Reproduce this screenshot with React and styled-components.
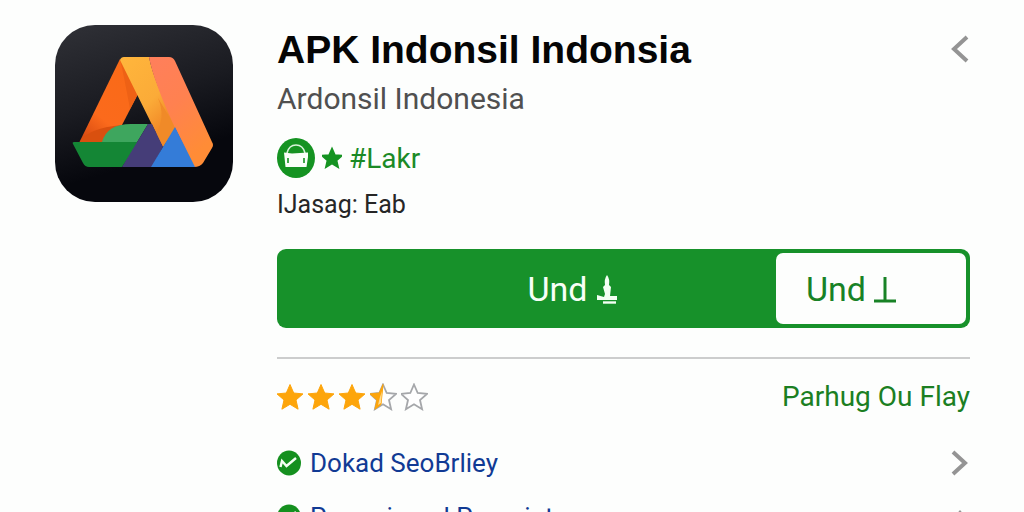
import React, { useState } from "react";
import styled, { createGlobalStyle } from "styled-components";

const links = [
    { name: "Dokad SeoBrliey", arrow: "right" },
    { name: "Panarrimeal Paparint", arrow: "up" },
];
const stars = [1, 1, 1, 0.5, 0];

const STAR_PATH =
    "M14 1.5 L17.7 10 L27 10.9 L20 17 L22.1 26.2 L14 21.3 L5.9 26.2 L8 17 L1 10.9 L10.3 10 Z";

const arrows = {
    left: "M17 3 L4 15 L17 27",
    right: "M3 4 L15 15 L3 26",
    up: "M3 19 L10 11 L17 19",
};

const AppLogo = () => (
    <Logo viewBox="0 0 178 178" role="img" aria-label="APK Indonsil">
        <defs>
            <linearGradient id="tile" x1="0" y1="0" x2="0.3" y2="1">
                <stop offset="0" stopColor="#303137" />
                <stop offset="0.5" stopColor="#1a1b21" />
                <stop offset="0.85" stopColor="#06070d" />
            </linearGradient>
            <linearGradient id="leftLeg" x1="0.8" y1="0" x2="0.2" y2="1">
                <stop offset="0" stopColor="#f96a17" />
                <stop offset="0.7" stopColor="#fb6a1c" />
                <stop offset="1" stopColor="#d94c12" />
            </linearGradient>
            <linearGradient id="fold" x1="0" y1="0" x2="0.6" y2="1">
                <stop offset="0" stopColor="#ffb63c" />
                <stop offset="0.6" stopColor="#fbab38" />
                <stop offset="1" stopColor="#ef7f22" />
            </linearGradient>
            <linearGradient id="rightLeg" x1="0" y1="0" x2="0.5" y2="1">
                <stop offset="0" stopColor="#ff7f5c" />
                <stop offset="0.5" stopColor="#ff8150" />
                <stop offset="1" stopColor="#ff8c36" />
            </linearGradient>
        </defs>
        <rect width="178" height="177" rx="40" fill="url(#tile)" />
        <path d="M65 34 L83 69 L67 100 L50 118 L24 118 Z" fill="url(#leftLeg)" />
        <path d="M65 34 L83 69 L75 84 Q70 56 65 34 Z" fill="#ee6115" />
        <path d="M24 118 Q32 103 67 100 L58 118 Z" fill="#d9500f" />
        <path
            d="M69 32 L94 32 Q98 54 121 101 L108 122 L65 35 Q66 32 69 32 Z"
            fill="url(#fold)"
        />
        <path d="M103 73 L121 103 L108 122 L101 109 Q111 92 103 73 Z" fill="#f08a28" />
        <path
            d="M94 32 L114 32 Q118 32 120 36 L157 117 Q159 120 157 123 L148 138 Q145 142 139 142 L120 103 Q98 55 94 32 Z"
            fill="url(#rightLeg)"
        />
        <path d="M47 117 Q52 99 76 99 L93 99 L81 119 Z" fill="#3ea65e" />
        <path
            d="M19 117 L84 117 L67 142 L34 142 Q30 142 28 138 L18 119 Q17 117 19 117 Z"
            fill="#148635"
        />
        <path d="M93 99 L97 99 L108 122 L97 142 L67 142 Z" fill="#453d78" />
        <path d="M120 102 L140 142 L96 142 Z" fill="#347cd8" />
    </Logo>
);

const ShopBadge = () => (
    <svg width="38" height="40" viewBox="0 0 38 40" aria-hidden="true">
        <ellipse cx="19" cy="20" rx="19" ry="20" fill="#159322" />
        <path
            d="M10 15 Q12 7 19 7 Q26 7 28 15"
            fill="none"
            stroke="#d9f3da"
            strokeWidth="1.6"
        />
        <path d="M7 14.5 L15 15.5 L31 14.5 L31 19 L29.5 29 L8.5 29 Z" fill="#fafffa" />
        <path
            d="M11 20 L11 25 M27 20 L27 25"
            stroke="#159322"
            strokeWidth="1.6"
        />
    </svg>
);

const Star = ({ fill }) => (
    <svg width="27" height="28" viewBox="1 0 27 28" aria-hidden="true">
        {fill < 1 && (
            <path d={STAR_PATH} fill="#fff" stroke="#a5a7aa" strokeWidth="1.8" />
        )}
        {fill === 1 && <path d={STAR_PATH} fill="#fda50b" stroke="#fda50b" />}
        {fill === 0.5 && (
            <>
                <path
                    d="M14 1.5 L10.3 10 L1 10.9 L8 17 L5.9 26.2 L12 21.5 Z"
                    fill="#fda50b"
                    stroke="#fda50b"
                />
                <path d="M13 8 L12 20 L9 22 L11 14 Z" fill="#ffdc92" />
            </>
        )}
    </svg>
);

const Check = () => (
    <svg width="24" height="26" viewBox="0 0 24 26" aria-hidden="true">
        <ellipse cx="12" cy="13" rx="12" ry="12.5" fill="#15901f" />
        <path
            d="M3.5 17 L5 11 L9.5 16 L19 8"
            fill="none"
            stroke="#f4fff4"
            strokeWidth="2.4"
        />
    </svg>
);

const Chevron = ({ to }) => (
    <svg width="20" height="30" viewBox="0 0 20 30" aria-hidden="true">
        <path d={arrows[to]} fill="none" stroke="#949494" strokeWidth="4" />
    </svg>
);

const App = () => {
    const [installed, setInstalled] = useState(false);

    return (
        <>
            <GlobalStyle />
            <Page>
                <AppLogo />
                <Detail>
                    <Header>
                        <div>
                            <Title>APK Indonsil Indonsia</Title>
                            <Developer>Ardonsil Indonesia</Developer>
                        </div>
                        <IconButton aria-label="Back">
                            <Chevron to="left" />
                        </IconButton>
                    </Header>
                    <BadgeRow>
                        <ShopBadge />
                        <svg width="20" height="24" viewBox="1 1 26 26" aria-hidden="true">
                            <path d={STAR_PATH} fill="#159322" stroke="#159322" strokeWidth="2" />
                        </svg>
                        <span>#Lakr</span>
                    </BadgeRow>
                    <Usage>IJasag: Eab</Usage>
                    <InstallBar>
                        <InstallButton onClick={() => setInstalled(!installed)}>
                            Und
                            <svg width="22" height="32" viewBox="0 0 22 32" aria-hidden="true">
                                <path
                                    d="M11 2 Q14 6 13 12 L15 14 L14 23 L21 23 L21 27 L1 27 L1 22 L8 24 L9 21 L7 14 L9 12 Q8 6 11 2 Z"
                                    fill="#f4fff4"
                                />
                                <path d="M7 29.5 L20 29.5" stroke="#f4fff4" strokeWidth="2.4" />
                            </svg>
                        </InstallButton>
                        <OpenButton>
                            Und
                            <svg width="22" height="28" viewBox="0 0 22 28" aria-hidden="true">
                                <path
                                    d="M11 2 L11 26 M0 26 L22 26"
                                    stroke="#188226"
                                    strokeWidth="3"
                                />
                            </svg>
                        </OpenButton>
                    </InstallBar>
                    <RatingRow>
                        <Stars role="img" aria-label="3.5 / 5">
                            {stars.map((v, i) => (
                                <Star key={i} fill={v} />
                            ))}
                        </Stars>
                        <PlayLink href="#play">Parhug Ou Flay</PlayLink>
                    </RatingRow>
                    <LinkList>
                        {links.map((v) => (
                            <li key={v.name}>
                                <LinkItem href="#detail">
                                    <Check />
                                    <LinkText>{v.name}</LinkText>
                                    <Chevron to={v.arrow} />
                                </LinkItem>
                            </li>
                        ))}
                    </LinkList>
                </Detail>
            </Page>
        </>
    );
};

export default App;

const GlobalStyle = createGlobalStyle`
    * {
        box-sizing: border-box;
    }
    html {
        scrollbar-width: none;
    }
    body {
        margin: 0;
        background-color: #fdfefd;
        font-family: Roboto, "Liberation Sans", sans-serif;
    }
    svg {
        display: block;
        flex-shrink: 0;
    }
`;
const Page = styled.main`
    display: flex;
    align-items: flex-start;
    gap: 44px;
    padding: 25px 54px 0 55px;
    @media (max-width: 600px) {
        flex-direction: column;
        padding: 24px;
    }
`;
const Logo = styled.svg`
    width: 178px;
`;
const Detail = styled.section`
    flex: 1;
    min-width: 0;
`;
const Header = styled.header`
    display: flex;
    justify-content: space-between;
    align-items: flex-start;
`;
const Title = styled.h1`
    margin: 0;
    font-family: "Liberation Sans", sans-serif;
    font-size: 39px;
    font-weight: 700;
    line-height: 50px;
    color: #050505;
`;
const Developer = styled.p`
    margin: 0;
    font-size: 30px;
    line-height: 48px;
    color: #505050;
`;
const IconButton = styled.button`
    margin-top: 9px;
    padding: 0;
    border: none;
    background: none;
    cursor: pointer;
`;
const BadgeRow = styled.div`
    display: flex;
    align-items: center;
    gap: 7px;
    height: 40px;
    margin-top: 15px;
    font-size: 28px;
    color: #1b8a26;
`;
const Usage = styled.p`
    margin: 8px 0 0;
    font-size: 25px;
    line-height: 38px;
    color: #262626;
`;
const InstallBar = styled.div`
    display: flex;
    height: 79px;
    margin-top: 25px;
    padding: 4px;
    border-radius: 9px;
    background-color: #17912a;
`;
const InstallButton = styled.button`
    display: flex;
    flex: 1;
    justify-content: center;
    align-items: center;
    gap: 8px;
    padding: 0 0 0 88px;
    border: none;
    background: none;
    font-family: inherit;
    font-size: 34px;
    color: #f7fff7;
    cursor: pointer;
`;
const OpenButton = styled(InstallButton)`
    flex: 0 0 190px;
    justify-content: flex-start;
    padding: 0 0 0 30px;
    border-radius: 7px;
    background-color: #fdfefd;
    color: #188226;
`;
const RatingRow = styled.div`
    display: flex;
    justify-content: space-between;
    align-items: center;
    margin-top: 29px;
    padding-top: 18px;
    border-top: 2px solid #cccdcd;
`;
const Stars = styled.div`
    display: flex;
    gap: 4px;
`;
const PlayLink = styled.a`
    font-size: 28px;
    line-height: 40px;
    color: #1b7f22;
    text-decoration: none;
`;
const LinkList = styled.ul`
    margin: 19px 0 0;
    padding: 0;
    list-style: none;
`;
const LinkItem = styled.a`
    display: flex;
    align-items: center;
    gap: 9px;
    height: 54px;
    color: #113a94;
    text-decoration: none;
`;
const LinkText = styled.span`
    flex: 1;
    font-size: 26px;
`;
